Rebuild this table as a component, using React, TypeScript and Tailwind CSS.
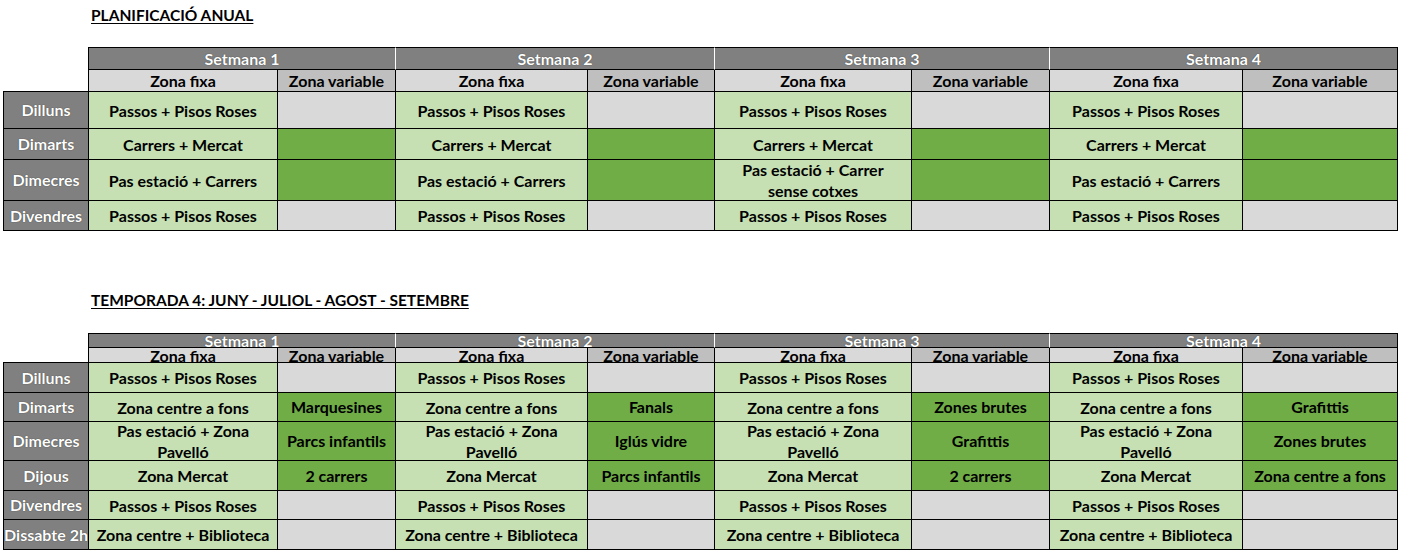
import React from 'react';

type VarCell = { text?: string; green?: boolean };

interface DayRow {
  day: string;
  height: string;
  fixa: string[][];
  variable: VarCell[];
}

const COLS = 'grid grid-rows-1 grid-cols-[86px_189px_118px_192px_127px_197px_138px_193px_155px]';

const shadow = '[text-shadow:0_0_1px_rgba(0,0,0,0.7)]';

const passos = ['Passos + Pisos Roses'];
const grey: VarCell = {};
const green: VarCell = { green: true };

const anual: DayRow[] = [
  { day: 'Dilluns', height: 'h-[37px]', fixa: [passos, passos, passos, passos], variable: [grey, grey, grey, grey] },
  {
    day: 'Dimarts',
    height: 'h-[31px]',
    fixa: [['Carrers + Mercat'], ['Carrers + Mercat'], ['Carrers + Mercat'], ['Carrers + Mercat']],
    variable: [green, green, green, green],
  },
  {
    day: 'Dimecres',
    height: 'h-[41px]',
    fixa: [
      ['Pas estació + Carrers'],
      ['Pas estació + Carrers'],
      ['Pas estació + Carrer', 'sense cotxes'],
      ['Pas estació + Carrers'],
    ],
    variable: [green, green, green, green],
  },
  { day: 'Divendres', height: 'h-[30px]', fixa: [passos, passos, passos, passos], variable: [grey, grey, grey, grey] },
];

const pavello = ['Pas estació + Zona', 'Pavelló'];
const centre = ['Zona centre a fons'];
const mercat = ['Zona Mercat'];
const biblio = ['Zona centre + Biblioteca'];

const temporada: DayRow[] = [
  { day: 'Dilluns', height: 'h-[30px]', fixa: [passos, passos, passos, passos], variable: [grey, grey, grey, grey] },
  {
    day: 'Dimarts',
    height: 'h-[29px]',
    fixa: [centre, centre, centre, centre],
    variable: [
      { text: 'Marquesines', green: true },
      { text: 'Fanals', green: true },
      { text: 'Zones brutes', green: true },
      { text: 'Grafittis', green: true },
    ],
  },
  {
    day: 'Dimecres',
    height: 'h-[39px]',
    fixa: [pavello, pavello, pavello, pavello],
    variable: [
      { text: 'Parcs infantils', green: true },
      { text: 'Iglús vidre', green: true },
      { text: 'Grafittis', green: true },
      { text: 'Zones brutes', green: true },
    ],
  },
  {
    day: 'Dijous',
    height: 'h-[30px]',
    fixa: [mercat, mercat, mercat, mercat],
    variable: [
      { text: '2 carrers', green: true },
      { text: 'Parcs infantils', green: true },
      { text: '2 carrers', green: true },
      { text: 'Zona centre a fons', green: true },
    ],
  },
  { day: 'Divendres', height: 'h-[29px]', fixa: [passos, passos, passos, passos], variable: [grey, grey, grey, grey] },
  { day: 'Dissabte 2h', height: 'h-[30px]', fixa: [biblio, biblio, biblio, biblio], variable: [grey, grey, grey, grey] },
];

function Planning({
  rows,
  headH,
  subH,
  headLeading,
}: {
  rows: DayRow[];
  headH: string;
  subH: string;
  headLeading: string;
}) {
  const weeks = [1, 2, 3, 4];
  return (
    <div className="ml-[3px] w-[1395px] text-[16px] font-bold text-black">
      {/* Week header */}
      <div className={`${COLS} ${headH}`}>
        <div className="border-r border-black" />
        {weeks.map((w) => (
          <div
            key={w}
            className={`col-span-2 flex min-h-0 items-center justify-center border-y border-r border-y-black bg-[#808080] font-bold text-white ${headLeading} ${shadow} ${
              w === 4 ? 'border-r-black' : 'border-r-white'
            }`}
          >
            Setmana {w}
          </div>
        ))}
      </div>

      {/* Zona header */}
      <div className={`${COLS} ${subH}`}>
        <div className="border-r border-b border-black" />
        {weeks.map((w) => (
          <React.Fragment key={w}>
            <div className={`flex min-h-0 items-center justify-center border-r border-b border-black bg-[#d9d9d9] ${headLeading}`}>
              Zona fixa
            </div>
            <div className={`flex min-h-0 items-center justify-center border-r border-b border-black bg-[#bfbfbf] ${headLeading}`}>
              Zona variable
            </div>
          </React.Fragment>
        ))}
      </div>

      {/* Days */}
      {rows.map((row) => (
        <div key={row.day} className={`${COLS} ${row.height}`}>
          <div
            className={`flex min-h-0 items-center justify-center whitespace-nowrap border-x border-b border-black bg-[#808080] leading-[20px] text-white ${shadow}`}
          >
            {row.day}
          </div>
          {weeks.map((w, i) => {
            const v = row.variable[i];
            return (
              <React.Fragment key={w}>
                <div className="flex min-h-0 flex-col items-center justify-center whitespace-nowrap border-r border-b border-black bg-[#c6e0b4] text-center leading-[21px]">
                  {row.fixa[i].map((line) => (
                    <span key={line}>{line}</span>
                  ))}
                </div>
                <div
                  className={`flex min-h-0 items-center justify-center whitespace-nowrap border-r border-b border-black leading-[20px] ${
                    v.green ? 'bg-[#70ad47]' : 'bg-[#d9d9d9]'
                  }`}
                >
                  {v.text}
                </div>
              </React.Fragment>
            );
          })}
        </div>
      ))}
    </div>
  );
}

export default function App() {
  return (
    <div className="h-[556px] w-[1402px] overflow-hidden bg-white font-['Lato',sans-serif]">
      <div className="h-[47px] pl-[91px] pt-[5px]">
        <h1 className="text-[15.5px] font-bold leading-[20px] text-black underline decoration-1 underline-offset-2">
          PLANIFICACIÓ ANUAL
        </h1>
      </div>
      <Planning rows={anual} headH="h-[23px]" subH="h-[22px]" headLeading="leading-[20px]" />

      <div className="h-[102px] pl-[91px] pt-[59px]">
        <h2 className="text-[15.5px] font-bold leading-[20px] text-black underline decoration-1 underline-offset-2">
          TEMPORADA 4: JUNY - JULIOL - AGOST - SETEMBRE
        </h2>
      </div>
      <Planning rows={temporada} headH="h-[15px]" subH="h-[15px]" headLeading="leading-[13px]" />
    </div>
  );
}
